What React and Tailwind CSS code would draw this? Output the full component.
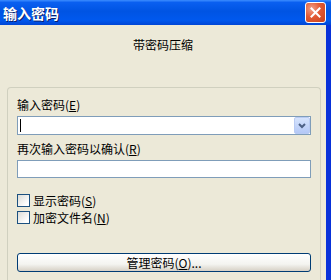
import React from "react";

const font = { fontFamily: '"Noto Sans CJK SC", "Noto Sans", sans-serif' };

function Checkbox({ label, hot }) {
  return (
    <div className="flex items-center h-[17px]">
      <div className="w-[13px] h-[13px] border border-[#1C5180] bg-[linear-gradient(135deg,#DCDCD7_0%,#FFFFFF_80%)]" />
      <span className="ml-[3px] text-[12px] leading-[12px] text-black">
        {label}(<span className="underline">{hot}</span>)
      </span>
    </div>
  );
}

export default function App() {
  return (
    <div className="w-[331px] h-[280px] overflow-hidden bg-[#ECE9D8] flex flex-col" style={font}>
      <div className="h-[25px] shrink-0 flex items-center justify-between pl-[3px] pr-[5px] bg-[linear-gradient(to_bottom,#3C8DFF_0%,#0A5FF0_10%,#0054E3_45%,#0058EE_80%,#0046D5_100%)]">
        <span className="text-white font-bold text-[14px] leading-[14px] [text-shadow:1px_1px_0_#0A1E6A]">输入密码</span>
        <div className="w-[21px] h-[21px] rounded-[3px] border border-white bg-[radial-gradient(circle_at_30%_30%,#F0A08A_0%,#E35A34_45%,#C5421D_100%)] flex items-center justify-center">
          <svg width="11" height="11" viewBox="0 0 11 11">
            <path d="M1.5 1.5 L9.5 9.5 M9.5 1.5 L1.5 9.5" stroke="white" strokeWidth="2" strokeLinecap="square" />
          </svg>
        </div>
      </div>
      <div className="flex-1 flex">
        <div className="flex-1 flex flex-col">
          <div className="h-[62px] pt-[13px] text-center text-[12px] leading-[14px] text-black">带密码压缩</div>
          <div className="ml-[7px] mr-[5px] flex-1 border border-[#D0D0BF] border-b-0 rounded-t-[4px] pl-[9px] pr-[9px] pt-[10px] flex flex-col">
            <div className="text-[12px] leading-[14px] text-black h-[18px]">
              输入密码(<span className="underline">E</span>)
            </div>
            <div className="h-[19px] border border-[#7F9DB9] bg-white flex items-center relative">
              <div className="ml-[2px] w-[1px] h-[13px] bg-black" />
              <div className="flex-1" />
              <div className="w-[16px] h-[17px] rounded-[2px] bg-[linear-gradient(to_bottom,#D6E4FD,#B4C8F6)] border border-[#B9CBF3] flex items-center justify-center">
                <svg width="8" height="6" viewBox="0 0 8 6">
                  <path d="M1 1 L4 4 L7 1" stroke="#4D6185" strokeWidth="2" fill="none" />
                </svg>
              </div>
            </div>
            <div className="mt-[7px] text-[12px] leading-[14px] text-black h-[18px]">
              再次输入密码以确认(<span className="underline">R</span>)
            </div>
            <div className="h-[18px] border border-[#7F9DB9] bg-white" />
            <div className="mt-[14px] flex flex-col">
              <Checkbox label="显示密码" hot="S" />
              <Checkbox label="加密文件名" hot="N" />
            </div>
            <div className="mt-[27px] h-[19px] rounded-[3px] border border-[#003C74] bg-[linear-gradient(to_bottom,#FFFFFF_0%,#F4F4F0_60%,#D6D0C5_100%)] flex items-center justify-center text-[12px] leading-[12px] text-black">
              管理密码(<span className="underline">O</span>)...
            </div>
          </div>
        </div>
        <div className="w-[5px] bg-[#0831D9]" />
      </div>
    </div>
  );
}
